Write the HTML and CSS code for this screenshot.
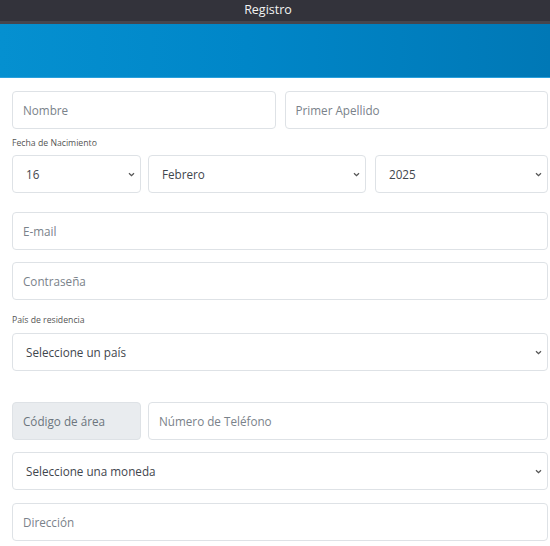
FILE: index.html
```html
<!DOCTYPE html>
<html>
<head>
    <title>Registro</title>
    <link rel="stylesheet" href="styles.css">
</head>
<body>
    <div class="titlebar">Registro</div>
    <div class="banner"></div>

    <form class="form">
        <div class="row">
            <input type="text" class="field" placeholder="Nombre">
            <input type="text" class="field" placeholder="Primer Apellido">
        </div>

        <label class="small-label">Fecha de Nacimiento</label>
        <div class="row row-date">
            <select class="field select day">
                <option>16</option>
            </select>
            <select class="field select month">
                <option>Febrero</option>
            </select>
            <select class="field select year">
                <option>2025</option>
            </select>
        </div>

        <div class="row">
            <input type="email" class="field" placeholder="E-mail">
        </div>
        <div class="row">
            <input type="password" class="field" placeholder="Contraseña">
        </div>

        <label class="small-label label-country">País de residencia</label>
        <div class="row">
            <select class="field select">
                <option>Seleccione un país</option>
            </select>
        </div>

        <div class="row row-phone">
            <div class="field area">Código de área</div>
            <input type="tel" class="field" placeholder="Número de Teléfono">
        </div>
        <div class="row">
            <select class="field select">
                <option>Seleccione una moneda</option>
            </select>
        </div>
        <div class="row row-last">
            <input type="text" class="field" placeholder="Dirección">
        </div>
    </form>
</body>
</html>
```

FILE: styles.css
```css
* {
    margin: 0;
    padding: 0;
    box-sizing: border-box;
}

body {
    font-family: "Open Sans", "Noto Sans", sans-serif;
    background: #fff;
    color: #495057;
}

.titlebar {
    height: 24px;
    padding-right: 14px;
    background: #33333b;
    border-bottom: 3px solid #46464e;
    color: #f2f2f2;
    font-size: 12.5px;
    line-height: 20px;
    text-align: center;
}

.banner {
    height: 54px;
    background: linear-gradient(90deg, #0590d0 0%, #0086c8 45%, #0078b6 100%);
    border-bottom: 1px solid #2aa0dc;
}

.form {
    padding: 13px 2px 0 12px;
}

.row {
    display: flex;
    gap: 9px;
    margin-bottom: 12px;
}

.field {
    flex: 1;
    min-width: 0;
    height: 38px;
    padding: 0 10px;
    border: 1px solid #dee2e6;
    border-radius: 4px;
    background: #fff;
    font-family: inherit;
    font-size: 11.7px;
    color: #495057;
    outline: none;
}

.field::placeholder {
    color: #7a828a;
}

.select {
    appearance: none;
    -webkit-appearance: none;
    padding-left: 13px;
    background-image: url("data:image/svg+xml,%3Csvg xmlns='http://www.w3.org/2000/svg' width='7' height='5' viewBox='0 0 7 5'%3E%3Cpath d='M1 1.2l2.5 2.5 2.5-2.5' fill='none' stroke='%23555' stroke-width='1.3'/%3E%3C/svg%3E");
    background-repeat: no-repeat;
    background-position: right 5px center;
    color: #3f464d;
}

.small-label {
    display: block;
    font-size: 8.7px;
    color: #555;
    line-height: 12px;
    margin: -4px 0 6px;
}

.label-country {
    margin: 14px 0 7px;
}

.row-date {
    gap: 7px;
    margin-bottom: 19px;
}

.row-date .day {
    flex: 0 0 129px;
}

.row-date .month {
    flex: 0 0 218px;
    margin-right: 2px;
}

.row-phone {
    gap: 7px;
    margin-top: 31px;
}

.row-last {
    margin-top: 13px;
}

.area {
    flex: 0 0 129px;
    background: #e9ecef;
    display: flex;
    align-items: center;
    color: #6c757d;
}
```
